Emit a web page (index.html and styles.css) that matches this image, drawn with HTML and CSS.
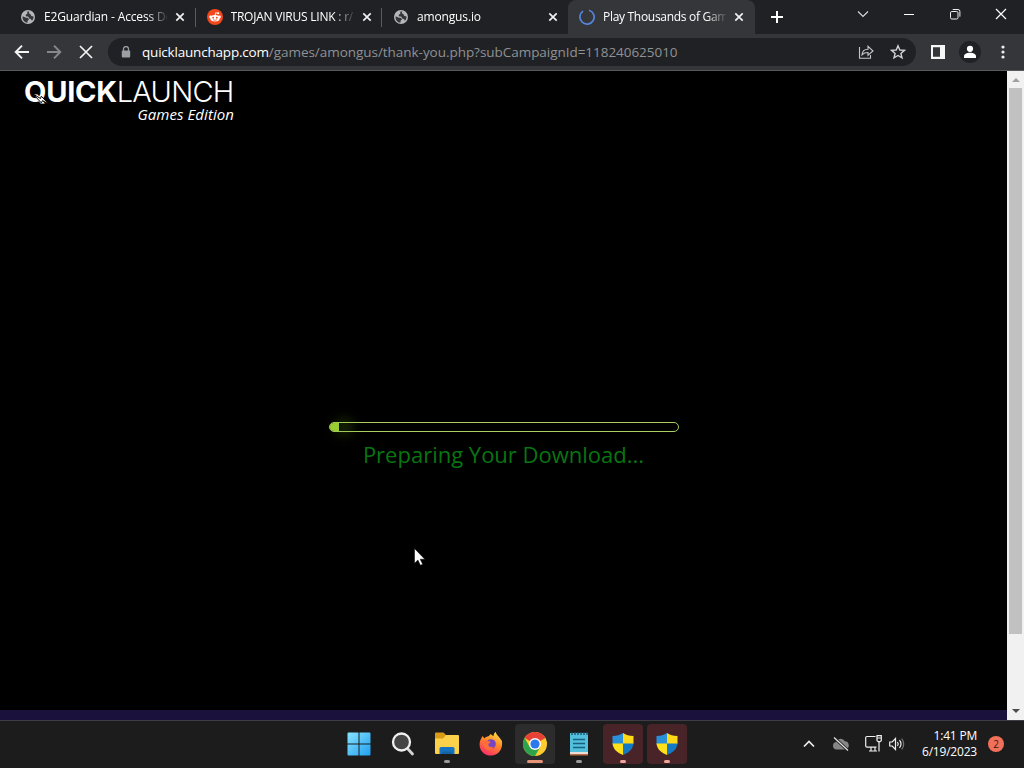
FILE: index.html
```html
<!DOCTYPE html>
<html lang="en">
<head>
  <meta charset="UTF-8">
  <meta name="viewport" content="width=device-width, initial-scale=1">
  <title>Play Thousands of Games</title>
  <link rel="stylesheet" href="styles.css">
</head>
<body>

<svg class="defs" width="0" height="0">
  <symbol id="globe" viewBox="0 0 16 16">
    <circle cx="8" cy="8" r="7" fill="#b4b7ba"/>
    <path d="M2.600 7.200 5.400 8.600l2.600.3 1 1.600-1.400 1.300-.2 1.900C4.500 13.500 2.200 11 2.600 7.200zM7.300 2.500l2-.1-.5 1.800 1.500.9 1.100 1.800 2.200.5c0 1.700-.6 3.200-1.700 4.300l-1-1.700-1.900-.5-.5-1.700-2.600-.6-.2-1.500 1.600-1z" fill="#34363a"/>
  </symbol>
  <symbol id="close" viewBox="0 0 10 10">
    <path d="M1.300 1.300l7.400 7.400M8.700 1.300L1.300 8.700" fill="none" stroke="#f1f1f1" stroke-width="1.700"/>
  </symbol>
  <symbol id="shield" viewBox="0 0 24 24">
    <path d="M12 1c3 2 6 3 10.500 3v8H12z" fill="#ffd817"/>
    <path d="M12 1C9 3 6 4 1.500 4v8H12z" fill="#2a91d8"/>
    <path d="M1.500 11.500H12V23C6 20.500 2 17 1.500 11.500z" fill="#ffe11a"/>
    <path d="M22.500 11.500H12V23c6-2.500 10-6 10.500-11.500z" fill="#1479c4"/>
  </symbol>
</svg>

<div class="tabs">
  <div class="tab">
    <svg class="favicon"><use href="#globe"/></svg>
    <span class="title t1">E2Guardian - Access Denied</span>
    <svg class="close"><use href="#close"/></svg>
  </div>
  <div class="tab">
    <svg class="favicon" viewBox="0 0 16 16">
      <circle cx="8" cy="8" r="8" fill="#f4471c"/>
      <path d="M8 6.800l.7-3 2.200.5" fill="none" stroke="#fff" stroke-width=".9"/>
      <circle cx="11.200" cy="4.200" r="1" fill="#fff"/>
      <circle cx="3.500" cy="7.900" r="1.300" fill="#fff"/>
      <circle cx="12.500" cy="7.900" r="1.300" fill="#fff"/>
      <ellipse cx="8" cy="9.300" rx="4.700" ry="3.300" fill="#fff"/>
      <circle cx="6.200" cy="8.700" r=".9" fill="#f4471c"/>
      <circle cx="9.800" cy="8.700" r=".9" fill="#f4471c"/>
      <path d="M6 10.700q2 1.200 4 0" fill="none" stroke="#f4471c" stroke-width=".7"/>
    </svg>
    <span class="title t2">TROJAN VIRUS LINK : r/</span>
    <svg class="close"><use href="#close"/></svg>
  </div>
  <div class="tab">
    <svg class="favicon"><use href="#globe"/></svg>
    <span class="title t3">amongus.io</span>
    <svg class="close"><use href="#close"/></svg>
  </div>
  <div class="tab active">
    <svg class="favicon" viewBox="0 0 16 16"><path d="M4.100 2.100A7.100 7.100 0 1 0 10 1.200" fill="none" stroke="#5584d6" stroke-width="1.700"/></svg>
    <span class="title t4">Play Thousands of Games</span>
    <svg class="close"><use href="#close"/></svg>
  </div>
  <svg class="plus" viewBox="0 0 12 12"><path d="M6 0v12M0 6h12" stroke="#fff" stroke-width="2"/></svg>
  <div class="window-buttons">
    <svg viewBox="0 0 12 12"><path d="M1 3.500l5 5 5-5" fill="none" stroke="#ddd" stroke-width="1.100"/></svg>
    <svg viewBox="0 0 12 12"><path d="M1 6.500h10" stroke="#fff" stroke-width="1"/></svg>
    <svg viewBox="0 0 12 12"><rect x="1.500" y="3.500" width="7.500" height="7.500" rx="1.300" fill="none" stroke="#eee"/><path d="M3.700 1.500H9Q10.900 1.500 10.900 3.400v5.300" fill="none" stroke="#eee"/></svg>
    <svg viewBox="0 0 12 12"><path d="M1 1l10 10M11 1L1 11" stroke="#fff" stroke-width="1.200"/></svg>
  </div>
</div>

<div class="toolbar">
  <svg class="nav" viewBox="0 0 16 16"><path d="M15 8H2M8 1.700L1.700 8 8 14.300" fill="none" stroke="#f4f4f4" stroke-width="1.900"/></svg>
  <svg class="nav" viewBox="0 0 16 16"><path d="M1 8h13M8 1.700L14.300 8 8 14.300" fill="none" stroke="#87888b" stroke-width="1.900"/></svg>
  <svg class="nav" viewBox="0 0 16 16"><path d="M2 2l12 12M14 2L2 14" fill="none" stroke="#f4f4f4" stroke-width="1.700"/></svg>
  <div class="address">
    <svg class="lock" viewBox="0 0 10 12"><path d="M2.500 5V3a2.500 2.500 0 0 1 5 0v2" fill="none" stroke="#9b9ea2" stroke-width="1.300"/><rect x=".8" y="4.500" width="8.400" height="7" rx="1" fill="#9b9ea2"/></svg>
    <span class="url"><span class="domain">quicklaunchapp.com</span><span class="path">/games/amongus/thank-you.php?subCampaignId=118240625010</span></span>
    <svg class="share" viewBox="0 0 16 16"><path d="M1.500 3v11.300h11V11M4 10.800C4.300 7 6.500 5.300 10 5.200V2.300L15 7l-5 4.200V8.500C7.300 8.500 5.500 9.200 4 10.800z" fill="none" stroke="#c3c5c7" stroke-width="1.100"/></svg>
    <svg class="star" viewBox="0 0 16 16"><path d="M8 1.800l1.800 4.200 4.600.4-3.500 3 1.100 4.500L8 11.500l-4 2.400 1.100-4.500-3.500-3 4.600-.4z" fill="none" stroke="#d0d2d4" stroke-width="1.400"/></svg>
  </div>
  <svg class="panel" viewBox="0 0 14 14"><path fill-rule="evenodd" d="M0 0h14v14H0zM2 2.200v9.600h7V2.200z" fill="#f7f7f7"/></svg>
  <svg class="profile" viewBox="0 0 22 22"><circle cx="11" cy="11" r="11" fill="#202124"/><circle cx="11" cy="7.800" r="3.100" fill="#fff"/><path d="M5 17v-1.700c0-2.200 2.700-3.500 6-3.500s6 1.300 6 3.500V17z" fill="#fff"/></svg>
  <svg class="dots" viewBox="0 0 4 14"><circle cx="2" cy="2" r="1.600" fill="#eee"/><circle cx="2" cy="7" r="1.600" fill="#eee"/><circle cx="2" cy="12" r="1.600" fill="#eee"/></svg>
</div>

<div class="viewport">
  <main>
    <header class="logo">
      <div class="brand"><b>QUICK</b><span>LAUNCH</span>
        <svg class="bolt" viewBox="0 0 18 12"><path d="M1 1l7.500 4.500.8-2.300L17 11.300 10.500 7.600 9.300 9.800z" fill="#fff" stroke="#000" stroke-width="1"/></svg>
      </div>
      <div class="edition">Games Edition</div>
    </header>
    <section class="download">
      <div class="progress"><div class="bar"></div></div>
      <p>Preparing Your Download...</p>
    </section>
    <footer></footer>
  </main>
  <div class="scrollbar">
    <svg viewBox="0 0 8 4"><path d="M0 4l4-4 4 4z" fill="#a0a0a0"/></svg>
    <div class="thumb"></div>
    <svg viewBox="0 0 8 4"><path d="M0 0l4 4 4-4z" fill="#4c4c4c"/></svg>
  </div>
</div>

<svg class="cursor" viewBox="0 0 12 18"><path d="M.5.500v14.800l3.400-3.300 2.500 5.300 2.300-1.100-2.500-5h4.600z" fill="#fff" stroke="#000" stroke-width=".5"/></svg>

<div class="taskbar">
  <div class="apps">
    <div class="app">
      <svg viewBox="0 0 24 24">
        <defs><linearGradient id="win" gradientUnits="userSpaceOnUse" x1="0" y1="0" x2="24" y2="24"><stop offset="0" stop-color="#8be5ff"/><stop offset="1" stop-color="#1d9df0"/></linearGradient></defs>
        <path d="M.5 1.500Q.5.500 1.500.500h10v11H.5zM12.500.500h10q1 0 1 1v10h-11zM.5 12.500h11v11h-10q-1 0-1-1zM12.500 12.500h11v10q0 1-1 1h-10z" fill="url(#win)"/>
      </svg>
    </div>
    <div class="app">
      <svg viewBox="0 0 24 24"><path d="M16.500 16.500l5 5.500" stroke="#d4d4d4" stroke-width="2.800" stroke-linecap="round"/><circle cx="10.500" cy="10" r="8.500" fill="#454545" stroke="#f0f0f0" stroke-width="2.300"/></svg>
    </div>
    <div class="app">
      <svg viewBox="0 0 24 24">
        <path d="M0 1.500Q0 .5 1 .5h7.500L11 3v5H0z" fill="#d99a16"/>
        <path d="M0 6.500h8L11 3h12q1 0 1 1v17q0 1-1 1H1q-1 0-1-1z" fill="#fbd14b"/>
        <path d="M4.500 22v-5.500q0-1.500 1.500-1.500h12q1.500 0 1.500 1.500V22z" fill="#1673c2"/>
        <path d="M7 22v-1.500q0-1 1-1h8q1 0 1 1V22z" fill="#1263a4"/>
      </svg>
      <i class="dot"></i>
    </div>
    <div class="app">
      <svg viewBox="0 0 24 24">
        <defs><linearGradient id="fox" x1=".8" y1="0" x2=".3" y2="1"><stop offset="0" stop-color="#ffe14a"/><stop offset=".45" stop-color="#ff8a25"/><stop offset="1" stop-color="#fa2c6a"/></linearGradient></defs>
        <path d="M3.500 4l1.800 2.300C6.500 5 8 4.500 9 4.500 10 4 11 3 11.500 2l3 2.200C14.500 2 15.500.500 16.800 0c.3 2.500 2.700 4 4.200 6.300 1 1.200 1 2 1 2.500l.7-1C24.500 16.500 20 23.500 12 23.500S-.5 17 .8 10C1.200 8 2.500 6 3.500 4z" fill="url(#fox)"/>
        <circle cx="12" cy="12" r="4.800" fill="#7545c6"/>
        <path d="M4 9.500c3-2 5-.5 7 0 1 .5.500 1.500-1.500 2.300-.7 3 2.500 4.200 5 2.700-1.500 4.500-7.500 4.500-9.500 0C4 12.500 3.500 11 4 9.500z" fill="#ff6d38"/>
      </svg>
    </div>
    <div class="app current">
      <svg viewBox="0 0 24 24">
        <circle cx="12" cy="12" r="12" fill="#ffcd2f"/>
        <path d="M12 12L1.600 6A12 12 0 0 1 22.400 6z" fill="#e84135"/>
        <path d="M1.600 6A12 12 0 0 0 12 24l5.200-9L12 12 6.800 15z" fill="#2da44c"/>
        <circle cx="12" cy="12" r="6" fill="#fff"/>
        <circle cx="12" cy="12" r="4.600" fill="#2c79ed"/>
      </svg>
      <i class="dot"></i>
    </div>
    <div class="app">
      <svg viewBox="0 0 24 24">
        <path d="M3 1h18v22H3z" fill="#52bfdc"/>
        <path d="M3 20h18v3H3z" fill="#e8ddd5"/><path d="M3 22h18v1.500H3z" fill="#b76e45"/>
        <path d="M5 0v3M8 0v3M11 0v3M14 0v3M17 0v3M20 0v3" stroke="#174f66" stroke-width="1.300"/>
        <path d="M6 7.500h12M6 11.500h12M6 15.500h12" stroke="#17617e" stroke-width="1.700"/>
      </svg>
      <i class="dot"></i>
    </div>
    <div class="app alert"><svg><use href="#shield"/></svg><i class="dot"></i></div>
    <div class="app alert"><svg><use href="#shield"/></svg><i class="dot"></i></div>
  </div>
  <div class="tray">
    <svg class="chevron" viewBox="0 0 12 8"><path d="M1 6.500l5-5 5 5" fill="none" stroke="#eee" stroke-width="1.700"/></svg>
    <svg class="cloud" viewBox="0 0 18 16"><path d="M4.500 13.500a3.800 3.800 0 0 1-.5-7.500A5 5 0 0 1 13 5.300a4.200 4.200 0 0 1 .8 8.200z" fill="#858585"/><path d="M2 1.500l14 13" stroke="#1c1c1c" stroke-width="3"/><path d="M2 1.500l14 13" stroke="#e5e5e5" stroke-width="1.200"/></svg>
    <svg class="network" viewBox="0 0 17 17"><path d="M10.500 1.500H2Q.7 1.500.7 2.800v8q0 1.300 1.300 1.300h9.500M4 16h8M6 12.500V16M10 12.500V16M14 7v9.500" fill="none" stroke="#eee" stroke-width="1.200"/><path d="M12 .7h4.300v5l-1.300 1h-1.700L12 5.700zM12 3h4" fill="none" stroke="#eee" stroke-width="1.200"/></svg>
    <svg class="sound" viewBox="0 0 16 14"><path d="M.7 5h2.500L6.500 1.500v11L3.200 9H.7z" fill="none" stroke="#eee" stroke-width="1.200"/><path d="M8.500 5q1.500 2 0 4M10.500 3.200q3 3.800 0 7.600" fill="none" stroke="#eee" stroke-width="1.200"/><path d="M12.700 1.500q4 5.500 0 11" fill="none" stroke="#777" stroke-width="1.200"/></svg>
    <div class="clock"><span class="time">1:41 PM</span><span class="date">6/19/2023</span></div>
    <span class="badge">2</span>
  </div>
</div>

</body>
</html>
```
FILE: styles.css
```css
* {
  box-sizing: border-box;
}

body {
  margin: 0;
  width: 1024px;
  height: 768px;
  overflow: hidden;
  display: flex;
  flex-direction: column;
  background: #000;
  font-family: 'Open Sans', 'Noto Sans', sans-serif;
  color: #fff;
}

svg {
  display: block;
  flex: none;
}

.defs {
  position: absolute;
}

/* tabs */
.tabs {
  height: 34px;
  flex: none;
  display: flex;
  align-items: center;
  background: #202124;
  padding-left: 9px;
}

.tab {
  width: 186.5px;
  height: 34px;
  display: flex;
  align-items: center;
  padding-left: 11px;
  background: linear-gradient(#5b5c5f, #5b5c5f) right 8px / 1px 19px no-repeat;
}

.tab:nth-child(3) {
  width: 186px;
  background: none;
}

.tab.active {
  background: #35363a;
  border-radius: 8px 8px 0 0;
}

.favicon {
  width: 16px;
  height: 16px;
  margin-right: 8px;
}

.title {
  width: 123px;
  margin-right: 8px;
  font-size: 12px;
  line-height: 18px;
  white-space: nowrap;
  overflow: hidden;
  -webkit-mask-image: linear-gradient(to right, #000 103px, transparent 125px);
  mask-image: linear-gradient(to right, #000 103px, transparent 125px);
}

.t1 { letter-spacing: -0.15px; }
.t2 { letter-spacing: -0.22px; }
.t3 { letter-spacing: -0.15px; }
.t4 { letter-spacing: -0.3px; }

.close {
  width: 10px;
  height: 10px;
}

.plus {
  width: 12px;
  height: 12px;
  margin-left: 16.5px;
}

.window-buttons {
  margin-left: auto;
  margin-right: 17px;
  padding-bottom: 6px;
  display: flex;
  gap: 34px;
}

.window-buttons svg {
  width: 12px;
  height: 12px;
}

/* toolbar */
.toolbar {
  height: 37px;
  flex: none;
  display: flex;
  align-items: center;
  background: #35363a;
  border-bottom: 1px solid #58595c;
  padding-left: 14px;
}

.nav {
  width: 16px;
  height: 16px;
  margin-right: 16px;
}

.address {
  width: 808px;
  height: 28px;
  margin-left: -2px;
  display: flex;
  align-items: center;
  border-radius: 14px;
  background: #202124;
  padding: 0 10px 0 13px;
}

.lock {
  width: 10px;
  height: 12px;
  margin-right: 11px;
}

.url {
  flex: 1;
  font-size: 13.5px;
  line-height: 20px;
  white-space: nowrap;
}

.domain {
  letter-spacing: -0.2px;
}

.path {
  letter-spacing: -0.04px;
  color: #8f9194;
}

.share, .star {
  width: 16px;
  height: 16px;
}

.star {
  margin-left: 16px;
}

.panel {
  width: 14px;
  height: 14px;
  margin-left: 15px;
}

.profile {
  width: 22px;
  height: 22px;
  margin-left: 14px;
}

.dots {
  width: 4px;
  height: 14px;
  margin-left: 20px;
}

/* page */
.viewport {
  flex: 1;
  display: flex;
}

main {
  width: 1007px;
  display: flex;
  flex-direction: column;
  background: #000;
}

.logo {
  width: 210px;
  height: 63px;
  margin-left: 24px;
  padding-top: 4px;
}

.brand {
  position: relative;
  height: 34px;
  font-family: Inter, sans-serif;
  font-size: 29px;
  line-height: 34px;
  white-space: nowrap;
}

.brand b {
  font-weight: 700;
  letter-spacing: -0.3px;
}

.brand span {
  font-weight: 300;
  letter-spacing: -0.75px;
}

.bolt {
  position: absolute;
  left: 8px;
  top: 18px;
  width: 18px;
  height: 12px;
}

.edition {
  font-style: italic;
  font-size: 15px;
  line-height: 20px;
  letter-spacing: 0.07px;
  margin-top: -5px;
  text-align: right;
}

.download {
  flex: 1;
  padding-top: 288px;
  display: flex;
  flex-direction: column;
  align-items: center;
}

.progress {
  width: 350px;
  height: 10px;
  border: 1px solid #a9cf62;
  border-radius: 5px;
}

.bar {
  width: 9px;
  height: 8px;
  border-radius: 4px 0 0 4px;
  background: #9acd32;
  box-shadow: 9px 0 14px 1px rgba(110, 170, 10, 0.6);
}

.download p {
  margin: 7px 0 0;
  font-size: 22px;
  line-height: 30px;
  color: #087512;
  white-space: nowrap;
}

footer {
  height: 10px;
  background: #1a123c;
}

.scrollbar {
  width: 17px;
  background: #f1f1f1;
  display: flex;
  flex-direction: column;
  align-items: center;
  padding: 7px 0;
}

.scrollbar svg {
  width: 8px;
  height: 4px;
}

.thumb {
  width: 13px;
  height: 546px;
  margin: 6px 0 auto;
  background: #c1c1c1;
}

.cursor {
  position: absolute;
  left: 413.5px;
  top: 548px;
  width: 12px;
  height: 18px;
}

/* taskbar */
.taskbar {
  height: 48px;
  flex: none;
  display: flex;
  background: #1c1c1c;
  border-top: 1px solid #3e3d43;
  padding-left: 339px;
}

.apps {
  display: flex;
  gap: 4px;
  padding-top: 3px;
}

.app {
  width: 40px;
  height: 40px;
  display: flex;
  flex-direction: column;
  align-items: center;
  padding-top: 8px;
  border-radius: 4px;
}

.app svg {
  width: 24px;
  height: 24px;
}

.dot {
  width: 6px;
  height: 3px;
  margin-top: 4px;
  border-radius: 2px;
  background: #9a9a9a;
}

.current {
  background: #2b2c2b;
}

.current .dot {
  width: 16px;
  background: #e89478;
}

.alert {
  background: #482328;
}

.alert .dot {
  background: #f0a59c;
}

.tray {
  margin-left: auto;
  margin-right: 20px;
  padding-bottom: 2px;
  display: flex;
  align-items: center;
}

.chevron {
  width: 12px;
  height: 8px;
}

.cloud {
  width: 18px;
  height: 16px;
  margin-left: 17px;
}

.network {
  width: 17px;
  height: 17px;
  margin-left: 15px;
}

.sound {
  width: 16px;
  height: 14px;
  margin-left: 7px;
}

.clock {
  width: 72px;
  display: flex;
  flex-direction: column;
  align-items: flex-end;
  font-size: 12px;
  line-height: 16px;
}

.time, .date {
  letter-spacing: -0.2px;
}

.badge {
  width: 16px;
  height: 16px;
  margin-left: 11px;
  border-radius: 50%;
  background: #f1705a;
  color: #3a1712;
  font-size: 10px;
  line-height: 16px;
  text-align: center;
}
```
